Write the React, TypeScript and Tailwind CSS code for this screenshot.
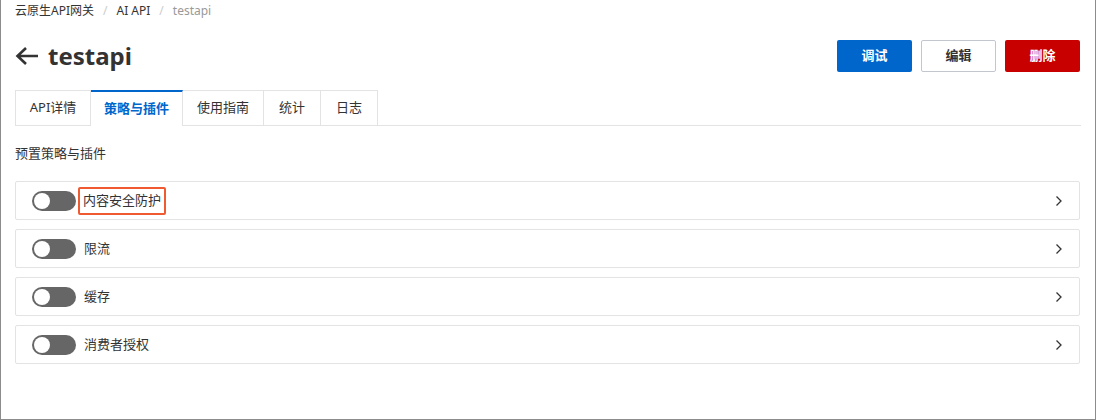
const tabs = [
  { name: "API详情", w: "w-[76px]" },
  { name: "策略与插件", w: "w-[92px]" },
  { name: "使用指南", w: "w-[81px]" },
  { name: "统计", w: "w-[57px]" },
  { name: "日志", w: "w-[57px]" },
]

const policies = [
  { name: "内容安全防护", highlight: true },
  { name: "限流" },
  { name: "缓存" },
  { name: "消费者授权" },
]

function Toggle() {
  return (
    <div className="flex h-[20px] w-[44px] items-center rounded-full bg-[#666666] px-[2px]">
      <div className="h-[16px] w-[16px] rounded-full bg-white" />
    </div>
  )
}

function Chevron() {
  return (
    <svg width="8" height="12" viewBox="0 0 8 12" fill="none">
      <path d="M1.5 1.5 L6 6 L1.5 10.5" stroke="#333" strokeWidth="1.3" />
    </svg>
  )
}

export default function App() {
  return (
    <div
      className="h-[420px] w-[1096px] overflow-hidden border-x border-b border-[#8c8c8c] bg-white text-[#333]"
      style={{ fontFamily: '"Noto Sans", "Noto Sans CJK SC", sans-serif' }}
    >
      <div className="px-[14px]">
        {/* breadcrumb */}
        <div className="flex h-[21px] items-center gap-[9px] text-[12px] leading-none">
          <span className="text-[#333]">云原生API网关</span>
          <span className="text-[#ccc]">/</span>
          <span className="text-[#333]">AI API</span>
          <span className="text-[#ccc]">/</span>
          <span className="text-[#999]">testapi</span>
        </div>

        {/* header */}
        <div className="mt-[19px] flex h-[32px] items-center justify-between pr-[1px]">
          <div className="flex items-center gap-[9px]">
            <svg width="24" height="20" viewBox="0 0 24 20" fill="none">
              <path d="M23 10 H3 M11 2 L2.5 10 L11 18" stroke="#333" strokeWidth="2.6" />
            </svg>
            <span className="text-[24px] font-bold leading-none text-[#333]">testapi</span>
          </div>
          <div className="flex gap-[9px]">
            <button className="h-[32px] w-[75px] rounded-[2px] bg-[#0066cc] text-[13px] font-bold text-white">调试</button>
            <button className="h-[32px] w-[75px] rounded-[2px] border border-[#c4c6cf] bg-white text-[13px] font-bold text-[#333]">编辑</button>
            <button className="h-[32px] w-[75px] rounded-[2px] bg-[#c80000] text-[13px] font-bold text-white">删除</button>
          </div>
        </div>

        {/* tabs */}
        <div className="mt-[18px] flex border-b border-[#e3e3e3] pr-[1px]">
          {tabs.map((t, i) =>
            i === 1 ? (
              <div
                key={t.name}
                className={`-mb-px flex h-[36px] items-center justify-center border-t-2 border-r border-[#0066cc] border-r-[#e3e3e3] bg-white text-[13px] font-bold text-[#0066cc] ${t.w}`}
              >
                {t.name}
              </div>
            ) : (
              <div
                key={t.name}
                className={`flex h-[35px] items-center justify-center border-t border-r border-[#e3e3e3] text-[13px] text-[#333] ${t.w} ${i === 0 ? "border-l" : ""}`}
              >
                {t.name}
              </div>
            )
          )}
        </div>

        <div className="mt-[21px] text-[13px] leading-none text-[#333]">预置策略与插件</div>

        {/* policy rows */}
        <div className="mt-[21px] flex flex-col gap-[9px] pr-[1px]">
          {policies.map((p) => (
            <div
              key={p.name}
              className="flex h-[39px] items-center justify-between rounded-[2px] border border-[#e3e3e3] pl-[16px] pr-[16px]"
            >
              <div className="flex items-center">
                <Toggle />
                {p.highlight ? (
                  <span className="ml-[2px] flex h-[28px] items-center rounded-[2px] border-2 border-[#f05a30] px-[3px] text-[13px] text-[#333]">
                    {p.name}
                  </span>
                ) : (
                  <span className="ml-[8px] text-[13px] text-[#333]">{p.name}</span>
                )}
              </div>
              <Chevron />
            </div>
          ))}
        </div>
      </div>
    </div>
  )
}
